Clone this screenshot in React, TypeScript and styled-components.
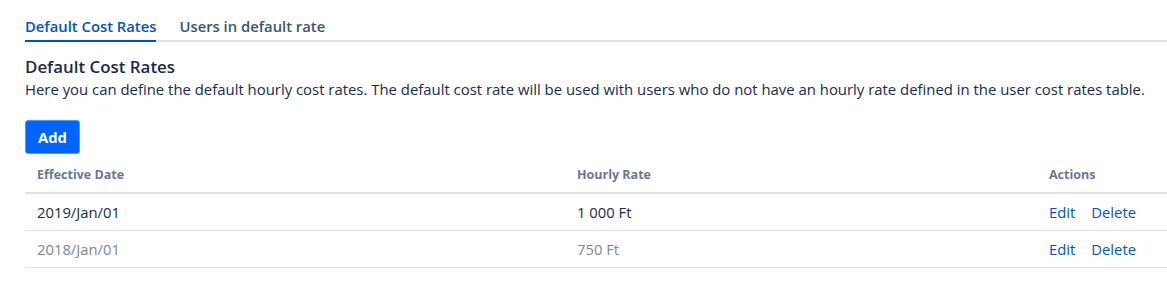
import React from "react";
import styled, { createGlobalStyle } from "styled-components";

const COLORS = {
  text: "#172B4D",
  subtle: "#42526E",
  muted: "#6B778C",
  faded: "#7A869A",
  link: "#0052CC",
  primary: "#0065FF",
  border: "#DFE1E6",
};

const GlobalStyle = createGlobalStyle`
  body {
    margin: 0;
    background: #ffffff;
    font-family: "Open Sans", "Noto Sans", sans-serif;
    color: ${COLORS.text};
  }
`;

const Page = styled.div`
  padding: 16px 0 0 25px;
`;

const TabList = styled.div`
  display: flex;
  gap: 23px;
  border-bottom: 2px solid ${COLORS.border};
`;

const Tab = styled.div<{ $active?: boolean }>`
  font-size: 14.8px;
  font-weight: 600;
  line-height: 20px;
  padding-bottom: 4px;
  margin-bottom: -2px;
  color: ${(p) => (p.$active ? COLORS.link : COLORS.subtle)};
  border-bottom: 2px solid ${(p) => (p.$active ? COLORS.link : "transparent")};
`;

const Heading = styled.h4`
  margin: 14px 0 0;
  font-size: 16.9px;
  font-weight: 600;
  line-height: 22px;
  color: ${COLORS.text};
`;

const Description = styled.p`
  margin: 0;
  font-size: 14.9px;
  line-height: 22px;
`;

const AddButton = styled.button`
  margin-top: 20px;
  height: 34px;
  padding: 0 12px;
  font-family: inherit;
  font-size: 14.8px;
  font-weight: 700;
  color: #ffffff;
  background: ${COLORS.primary};
  border: 1px solid #4C9AFF;
  border-radius: 3px;
`;

const Table = styled.table`
  width: 100%;
  margin-top: 2px;
  border-collapse: collapse;
  table-layout: fixed;
`;

const HeadCell = styled.th<{ $width?: number }>`
  width: ${(p) => (p.$width ? `${p.$width}px` : "auto")};
  padding: 9px 12px 8px;
  text-align: left;
  font-size: 12.5px;
  font-weight: 700;
  line-height: 19px;
  color: ${COLORS.muted};
  border-bottom: 2px solid ${COLORS.border};
`;

const Row = styled.tr<{ $past?: boolean }>`
  color: ${(p) => (p.$past ? COLORS.faded : COLORS.text)};
  border-bottom: 1px solid ${COLORS.border};
`;

const Cell = styled.td`
  padding: 8px 12px;
  font-size: 14.8px;
  line-height: 20px;
`;

const Actions = styled.div`
  display: flex;
  gap: 16px;
`;

const ActionLink = styled.a`
  color: ${COLORS.link};
  text-decoration: none;
  cursor: pointer;
`;

interface Rate {
  date: string;
  rate: string;
  past?: boolean;
}

const rates: Rate[] = [
  { date: "2019/Jan/01", rate: "1 000 Ft" },
  { date: "2018/Jan/01", rate: "750 Ft", past: true },
];

const App = () => {
  return (
    <Page>
      <GlobalStyle />
      <TabList>
        <Tab $active>Default Cost Rates</Tab>
        <Tab>Users in default rate</Tab>
      </TabList>

      <Heading>Default Cost Rates</Heading>
      <Description>
        Here you can define the default hourly cost rates. The default cost
        rate will be used with users who do not have an hourly rate defined in
        the user cost rates table.
      </Description>

      <AddButton>Add</AddButton>

      <Table>
        <thead>
          <tr>
            <HeadCell $width={516}>Effective Date</HeadCell>
            <HeadCell>Hourly Rate</HeadCell>
            <HeadCell $width={106}>Actions</HeadCell>
          </tr>
        </thead>
        <tbody>
          {rates.map((r) => (
            <Row key={r.date} $past={r.past}>
              <Cell>{r.date}</Cell>
              <Cell>{r.rate}</Cell>
              <Cell>
                <Actions>
                  <ActionLink>Edit</ActionLink>
                  <ActionLink>Delete</ActionLink>
                </Actions>
              </Cell>
            </Row>
          ))}
        </tbody>
      </Table>
    </Page>
  );
};

export default App;
